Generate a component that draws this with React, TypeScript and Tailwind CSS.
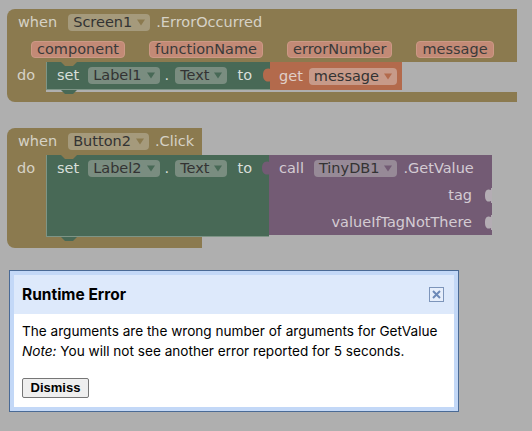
import * as React from "react";

function Arrow({ color }: { color: string }) {
  return (
    <svg width="8" height="7" viewBox="0 0 8 7" aria-hidden>
      <path d="M0 0.5 L8 0.5 L4 6.5 Z" fill={color} />
    </svg>
  );
}

function Chip({
  label,
  className,
  arrow,
}: {
  label: string;
  className: string;
  arrow?: string;
}) {
  return (
    <span
      className={`inline-flex h-[17px] shrink-0 items-center gap-[5px] rounded-[4px] px-[5px] text-[#333] ${className}`}
    >
      {label}
      {arrow && <Arrow color={arrow} />}
    </span>
  );
}

function OutputTab({ color, top }: { color: string; top: string }) {
  return (
    <svg
      width="9"
      height="16"
      viewBox="0 0 9 16"
      className={`absolute left-[-8px] ${top}`}
      aria-hidden
    >
      <path d="M9 0 V2 C3 0 1 4 1 8 C1 12 3 16 9 14 V16 Z" fill={color} />
    </svg>
  );
}

// notch cut into the right edge of a value block
function InputSocket({ top }: { top: string }) {
  return (
    <svg
      width="8"
      height="15"
      viewBox="0 0 8 15"
      className={`absolute right-0 ${top}`}
      aria-hidden
    >
      <path d="M8 0 H7 V2 C2 0 1 4 1 7.5 C1 11 2 15 7 13 V15 H8 Z" fill="#b4adb4" />
    </svg>
  );
}

function Notches({ bottom }: { bottom: string }) {
  return (
    <>
      <svg width="16" height="4" viewBox="0 0 16 4" className="absolute left-[14px] top-0" aria-hidden>
        <path d="M0 0 L4 4 L12 4 L16 0 Z" fill="#8b7a4f" />
      </svg>
      <svg width="16" height="4" viewBox="0 0 16 4" className={`absolute left-[14px] ${bottom}`} aria-hidden>
        <path d="M0 0 L4 4 L12 4 L16 0 Z" fill="#486956" />
      </svg>
    </>
  );
}

const olive = "bg-[#8b7a4f]";

function ErrorBlock() {
  return (
    <div className="flex w-[510px] flex-col">
      <div className={`flex h-[53px] flex-col rounded-tl-[8px] ${olive} pl-[11px] pt-[5px]`}>
        <div className="flex h-[17px] items-center text-[#d6d2c6]">
          <span>when</span>
          <Chip label="Screen1" className="ml-[11px] bg-[#a59a7c]" arrow="#8b7a4f" />
          <span className="ml-[6px]">.ErrorOccurred</span>
        </div>
        <div className="mt-[10px] flex h-[17px] items-center gap-[24px] pl-[13px]">
          {["component", "functionName", "errorNumber", "message"].map((p) => (
            <span
              key={p}
              className="inline-flex h-[17px] items-center rounded-[4px] border border-[#cc9885] bg-[#c38a76] px-[5px] text-[#3a3a3a]"
            >
              {p}
            </span>
          ))}
        </div>
      </div>
      <div className="flex h-[30px]">
        <div className={`w-[39px] ${olive} pl-[10px] pt-[5px] text-[#d6d2c6]`}>do</div>
        <div className="relative flex h-[28px] w-[224px] items-center border-b border-l border-[#7e9586] bg-[#486956] pl-[10px] text-[#d8dfda]">
          <Notches bottom="bottom-[-5px]" />
          <span>set</span>
          <Chip label="Label1" className="ml-[9px] bg-[#7a8d80]" arrow="#486956" />
          <span className="ml-[5px]">.</span>
          <Chip label="Text" className="ml-[6px] bg-[#7a8d80]" arrow="#486956" />
          <span className="ml-[10px]">to</span>
        </div>
        <div className="relative flex h-[28px] w-[132px] items-center bg-[#b36a4c] pl-[9px] text-[#e0cfc8]">
          <OutputTab color="#b36a4c" top="top-[5px]" />
          <span>get</span>
          <Chip label="message" className="ml-[6px] bg-[#c79a89]" arrow="#b36a4c" />
        </div>
      </div>
      <div className={`h-[10px] rounded-bl-[8px] ${olive}`} />
    </div>
  );
}

function ClickBlock() {
  return (
    <div className="mt-[26px] flex flex-col">
      <div className={`flex h-[27px] w-[195px] rounded-tl-[8px] ${olive} pl-[11px] pt-[5px]`}>
        <div className="flex h-[17px] items-center text-[#d6d2c6]">
          <span>when</span>
          <Chip label="Button2" className="ml-[11px] bg-[#a59a7c]" arrow="#8b7a4f" />
          <span className="ml-[6px]">.Click</span>
        </div>
      </div>
      <div className="flex h-[82px] items-start">
        <div className={`h-[82px] w-[39px] ${olive} pl-[10px] pt-[5px] text-[#d6d2c6]`}>do</div>
        <div className="relative flex h-[82px] w-[223px] items-start border-b border-l border-[#7e9586] bg-[#486956] pl-[10px] pt-[5px] text-[#d8dfda]">
          <Notches bottom="bottom-[-5px]" />
          <div className="flex h-[17px] items-center">
            <span>set</span>
            <Chip label="Label2" className="ml-[9px] bg-[#7a8d80]" arrow="#486956" />
            <span className="ml-[5px]">.</span>
            <Chip label="Text" className="ml-[6px] bg-[#7a8d80]" arrow="#486956" />
            <span className="ml-[10px]">to</span>
          </div>
        </div>
        <div className="relative flex h-[80px] w-[223px] flex-col items-end bg-[#735b74] pr-[20px] pt-[5px] text-[#d3cbd3]">
          <OutputTab color="#735b74" top="top-[5px]" />
          <div className="flex h-[17px] w-full items-center pl-[10px]">
            <span>call</span>
            <Chip label="TinyDB1" className="ml-[10px] bg-[#978a97]" arrow="#735b74" />
            <span className="ml-[6px]">.GetValue</span>
          </div>
          <div className="mt-[10px] h-[17px]">tag</div>
          <div className="mt-[10px] h-[17px]">valueIfTagNotThere</div>
          <InputSocket top="top-[33px]" />
          <InputSocket top="top-[60px]" />
        </div>
      </div>
      <div className={`h-[11px] w-[195px] rounded-bl-[8px] ${olive}`} />
    </div>
  );
}

function ErrorDialog() {
  return (
    <div className="ml-[2px] mt-[22px] w-[450px] border border-[#4a6a95] bg-[#c3d8f7] p-[4px] font-['Inter',sans-serif] text-black">
      <div className="flex h-[39px] items-center justify-between bg-[#dde9fb] pl-[8px] pr-[10px]">
        <span className="text-[15.5px] font-bold">Runtime Error</span>
        <button
          type="button"
          className="flex h-[15px] w-[15px] items-center justify-center border border-[#7d95ba] bg-[#e6eefb]"
        >
          <svg width="9" height="9" viewBox="0 0 9 9" aria-hidden>
            <path d="M1 1 L8 8 M8 1 L1 8" stroke="#6c89b8" strokeWidth="2" />
          </svg>
        </button>
      </div>
      <div className="bg-white px-[8px] pb-[9px] pt-[7px] text-[13.6px] leading-[20px]">
        <p>The arguments are the wrong number of arguments for GetValue</p>
        <p>
          <i>Note:</i> You will not see another error reported for 5 seconds.
        </p>
        <button
          type="button"
          className="mt-[17px] h-[20px] w-[67px] rounded-[2px] border border-[#767676] bg-[#efefef] font-['Liberation_Sans',sans-serif] text-[13px] font-bold leading-[18px]"
        >
          Dismiss
        </button>
      </div>
    </div>
  );
}

export default function App() {
  return (
    <div className="h-[431px] w-[532px] overflow-hidden bg-[#afafaf] pl-[7px] pt-[9px] font-['DejaVu_Sans',sans-serif] text-[14.5px] leading-[17px]">
      <ErrorBlock />
      <ClickBlock />
      <ErrorDialog />
    </div>
  );
}
